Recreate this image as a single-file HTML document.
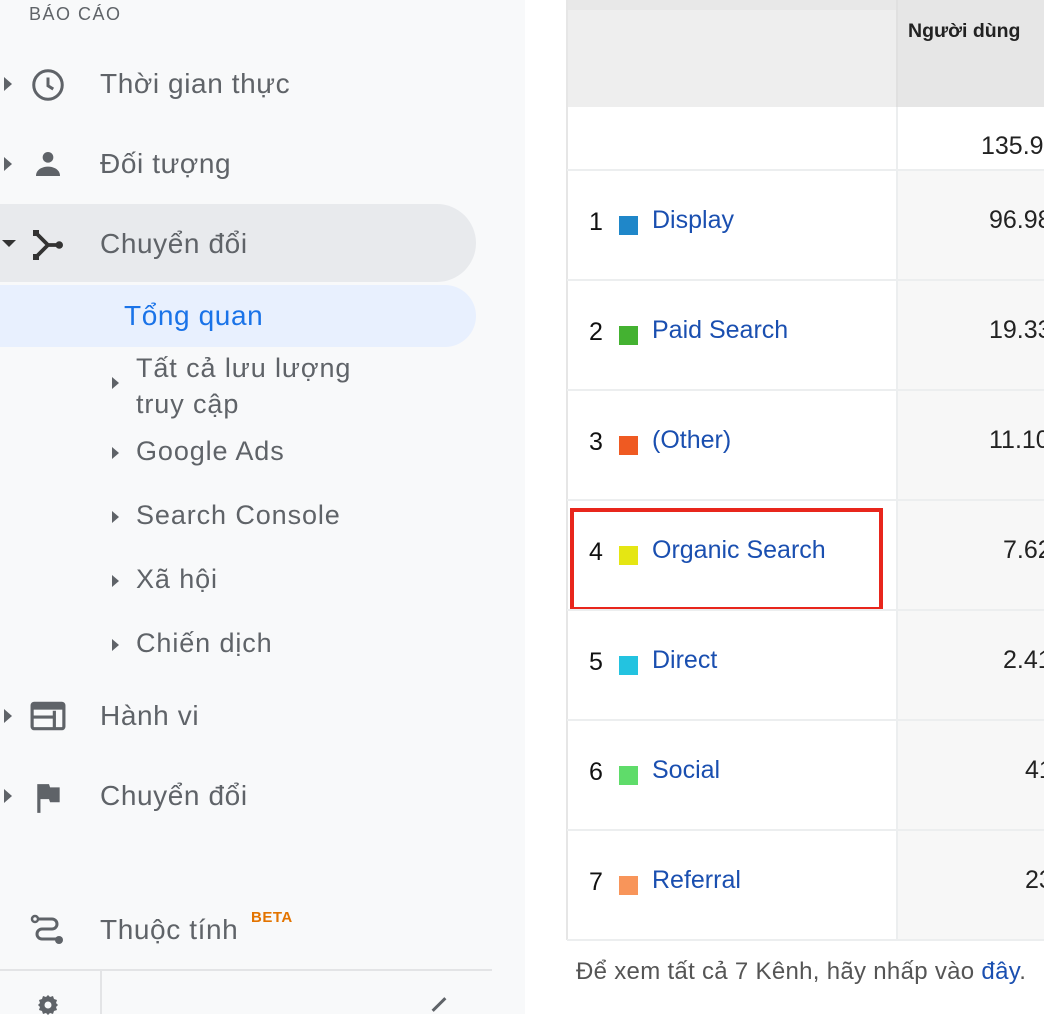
<!DOCTYPE html>
<html><head><meta charset="utf-8"><style>
body{margin:0;width:1044px;height:1014px;overflow:hidden;background:#fff;font-family:"Liberation Sans",sans-serif;position:relative}
.a{position:absolute;white-space:nowrap}
.sb{position:absolute;left:0;top:0;width:525px;height:1014px;background:#f8f9fa}
.nav{font-size:28px;color:#5f6368;letter-spacing:.6px}
.tri{position:absolute;width:0;height:0;border-top:7px solid transparent;border-bottom:7px solid transparent;border-left:8px solid #5f6368}
.sub{font-size:27px;color:#5f6368;letter-spacing:.9px}
.row{position:absolute;left:567px;width:477px;height:110px;border-top:2px solid #eceeef}
.vc{position:absolute;left:896px;width:148px;background:#f7f7f7;border-left:2px solid #eceeef}
.num{font-size:25px;color:#111}
.lnk{font-size:25px;color:#1a4fb0}
.sw{position:absolute;width:19px;height:19px}
.val{font-size:25px;color:#222}
</style></head><body>
<div class="sb"></div>
<div class="a" style="left:29px;top:4px;font-size:18px;color:#5f6368;letter-spacing:1.5px">BÁO CÁO</div>

<div class="tri" style="left:4px;top:77px"></div>
<svg class="a" style="left:30px;top:67px" width="36" height="36" viewBox="0 0 24 24"><circle cx="12" cy="12" r="9.5" fill="none" stroke="#5f6368" stroke-width="2"/><path d="M12 7v5.5l3.5 2.2" fill="none" stroke="#5f6368" stroke-width="2"/></svg>
<div class="a nav" style="left:100px;top:68px">Thời gian thực</div>

<div class="tri" style="left:4px;top:157px"></div>
<svg class="a" style="left:32px;top:148px" width="32" height="32" viewBox="0 0 24 24"><circle cx="12" cy="7" r="4" fill="#5f6368"/><path d="M3 21c0-5 5-7 9-7s9 2 9 7z" fill="#5f6368"/></svg>
<div class="a nav" style="left:100px;top:148px">Đối tượng</div>

<div class="a" style="left:0;top:204px;width:476px;height:78px;background:#e8eaed;border-radius:0 39px 39px 0"></div>
<div class="a" style="left:2px;top:240px;border-left:7px solid transparent;border-right:7px solid transparent;border-top:7px solid #333"></div>
<svg class="a" style="left:30px;top:226px" width="36" height="38" viewBox="0 0 24 24"><rect x="2" y="2" width="4" height="4" fill="#333"/><rect x="2" y="18" width="4" height="4" fill="#333"/><path d="M4 4l8 8-8 8M12 12h7" fill="none" stroke="#333" stroke-width="2.5"/><circle cx="19.5" cy="12" r="2.5" fill="#333"/></svg>
<div class="a nav" style="left:100px;top:228px">Chuyển đổi</div>

<div class="a" style="left:0;top:285px;width:476px;height:62px;background:#e8f0fe;border-radius:0 31px 31px 0"></div>
<div class="a nav" style="left:124px;top:300px;color:#1a73e8">Tổng quan</div>

<div class="tri" style="left:112px;top:377px;border-left-width:7px;border-top-width:6px;border-bottom-width:6px"></div>
<div class="a sub" style="left:136px;top:350px;line-height:36px">Tất cả lưu lượng<br>truy cập</div>
<div class="tri" style="left:112px;top:447px;border-left-width:7px;border-top-width:6px;border-bottom-width:6px"></div>
<div class="a sub" style="left:136px;top:436px">Google Ads</div>
<div class="tri" style="left:112px;top:511px;border-left-width:7px;border-top-width:6px;border-bottom-width:6px"></div>
<div class="a sub" style="left:136px;top:500px">Search Console</div>
<div class="tri" style="left:112px;top:575px;border-left-width:7px;border-top-width:6px;border-bottom-width:6px"></div>
<div class="a sub" style="left:136px;top:564px">Xã hội</div>
<div class="tri" style="left:112px;top:639px;border-left-width:7px;border-top-width:6px;border-bottom-width:6px"></div>
<div class="a sub" style="left:136px;top:628px">Chiến dịch</div>

<div class="tri" style="left:4px;top:709px"></div>
<svg class="a" style="left:30px;top:701px" width="36" height="30" viewBox="0 0 34 28"><rect x="2" y="2" width="30" height="24" rx="2" fill="none" stroke="#5f6368" stroke-width="3"/><rect x="2" y="2" width="30" height="6" fill="#5f6368"/><path d="M3 15h20M23 9v16" stroke="#5f6368" stroke-width="3"/></svg>
<div class="a nav" style="left:100px;top:700px">Hành vi</div>

<div class="tri" style="left:4px;top:789px"></div>
<svg class="a" style="left:34px;top:782px" width="30" height="32" viewBox="0 0 26 30"><path d="M2 2h11l1 3h9v14H14l-1-3H5v13H2z" fill="#5f6368"/></svg>
<div class="a nav" style="left:100px;top:780px">Chuyển đổi</div>

<svg class="a" style="left:30px;top:914px" width="36" height="34" viewBox="0 0 36 34"><circle cx="5" cy="5" r="3" fill="none" stroke="#5f6368" stroke-width="2.5"/><path d="M8 5h14a5 5 0 0 1 0 10H12a5 5 0 0 0 0 10h15" fill="none" stroke="#5f6368" stroke-width="3"/><circle cx="29" cy="26" r="4" fill="#5f6368"/></svg>
<div class="a nav" style="left:100px;top:914px">Thuộc tính</div>
<div class="a" style="left:251px;top:909px;font-size:15px;font-weight:bold;color:#e37400;letter-spacing:.5px">BETA</div>

<div class="a" style="left:0;top:969px;width:492px;height:2px;background:#e3e4e6"></div>
<div class="a" style="left:100px;top:971px;width:2px;height:43px;background:#e3e4e6"></div>
<svg class="a" style="left:31px;top:993px" width="34" height="24" viewBox="0 0 24 24"><path d="M12 2l2 2 3-1 1 3 3 1-1 3 2 2-2 2 1 3-3 1-1 3-3-1-2 2-2-2-3 1-1-3-3-1 1-3-2-2 2-2-1-3 3-1 1-3 3 1z" fill="#5f6368"/><circle cx="12" cy="12" r="3.5" fill="#f8f9fa"/></svg>
<div class="a" style="left:430px;top:1003px;width:18px;height:3px;background:#5f6368;transform:rotate(-45deg)"></div>

<!-- table -->
<div class="a" style="left:567px;top:0;width:477px;height:10px;background:#e8e8e8"></div>
<div class="a" style="left:567px;top:10px;width:477px;height:97px;background:#eeeeee"></div>
<div class="a" style="left:896px;top:0;width:148px;height:107px;background:#e6e6e6;border-left:2px solid #e0e0e0"></div>
<div class="a" style="left:908px;top:20px;font-size:19.5px;font-weight:bold;color:#222">Người dùng</div>
<div class="a" style="left:566px;top:0;width:2px;height:940px;background:#e6e6e6"></div>

<div class="row" style="top:107px;height:62px;border-top:none"></div>
<div class="vc" style="top:107px;height:62px;background:#fff"></div>
<div class="a val" style="left:981px;top:132px">135.973</div>

<div class="row" style="top:169px"></div><div class="vc" style="top:171px;height:108px"></div>
<div class="a num" style="left:589px;top:208px">1</div><div class="sw" style="left:619px;top:216px;background:#1f87c9"></div><div class="a lnk" style="left:652px;top:206px">Display</div><div class="a val" style="left:989px;top:206px">96.98</div>

<div class="row" style="top:279px"></div><div class="vc" style="top:281px;height:108px"></div>
<div class="a num" style="left:589px;top:318px">2</div><div class="sw" style="left:619px;top:326px;background:#44b231"></div><div class="a lnk" style="left:652px;top:316px">Paid Search</div><div class="a val" style="left:989px;top:316px">19.33</div>

<div class="row" style="top:389px"></div><div class="vc" style="top:391px;height:108px"></div>
<div class="a num" style="left:589px;top:428px">3</div><div class="sw" style="left:619px;top:436px;background:#ef5a22"></div><div class="a lnk" style="left:652px;top:426px">(Other)</div><div class="a val" style="left:989px;top:426px">11.10</div>

<div class="row" style="top:499px"></div><div class="vc" style="top:501px;height:108px"></div>
<div class="a num" style="left:589px;top:538px">4</div><div class="sw" style="left:619px;top:546px;background:#e5e613"></div><div class="a lnk" style="left:652px;top:536px">Organic Search</div><div class="a val" style="left:1003px;top:536px">7.62</div>
<div class="a" style="left:570px;top:508px;width:305px;height:95px;border:4px solid #e8261c"></div>

<div class="row" style="top:609px"></div><div class="vc" style="top:611px;height:108px"></div>
<div class="a num" style="left:589px;top:648px">5</div><div class="sw" style="left:619px;top:656px;background:#23c3e0"></div><div class="a lnk" style="left:652px;top:646px">Direct</div><div class="a val" style="left:1003px;top:646px">2.41</div>

<div class="row" style="top:719px"></div><div class="vc" style="top:721px;height:108px"></div>
<div class="a num" style="left:589px;top:758px">6</div><div class="sw" style="left:619px;top:766px;background:#5fdc6a"></div><div class="a lnk" style="left:652px;top:756px">Social</div><div class="a val" style="left:1025px;top:756px">41</div>

<div class="row" style="top:829px;height:108px;border-bottom:2px solid #eceeef"></div><div class="vc" style="top:831px;height:108px"></div>
<div class="a num" style="left:589px;top:868px">7</div><div class="sw" style="left:619px;top:876px;background:#f8955a"></div><div class="a lnk" style="left:652px;top:866px">Referral</div><div class="a val" style="left:1025px;top:866px">23</div>

<div class="a" style="left:576px;top:958px;font-size:24px;color:#555;letter-spacing:.3px">Để xem tất cả 7 Kênh, hãy nhấp vào <span style="color:#1a4fb0">đây</span>.</div>
</body></html>
